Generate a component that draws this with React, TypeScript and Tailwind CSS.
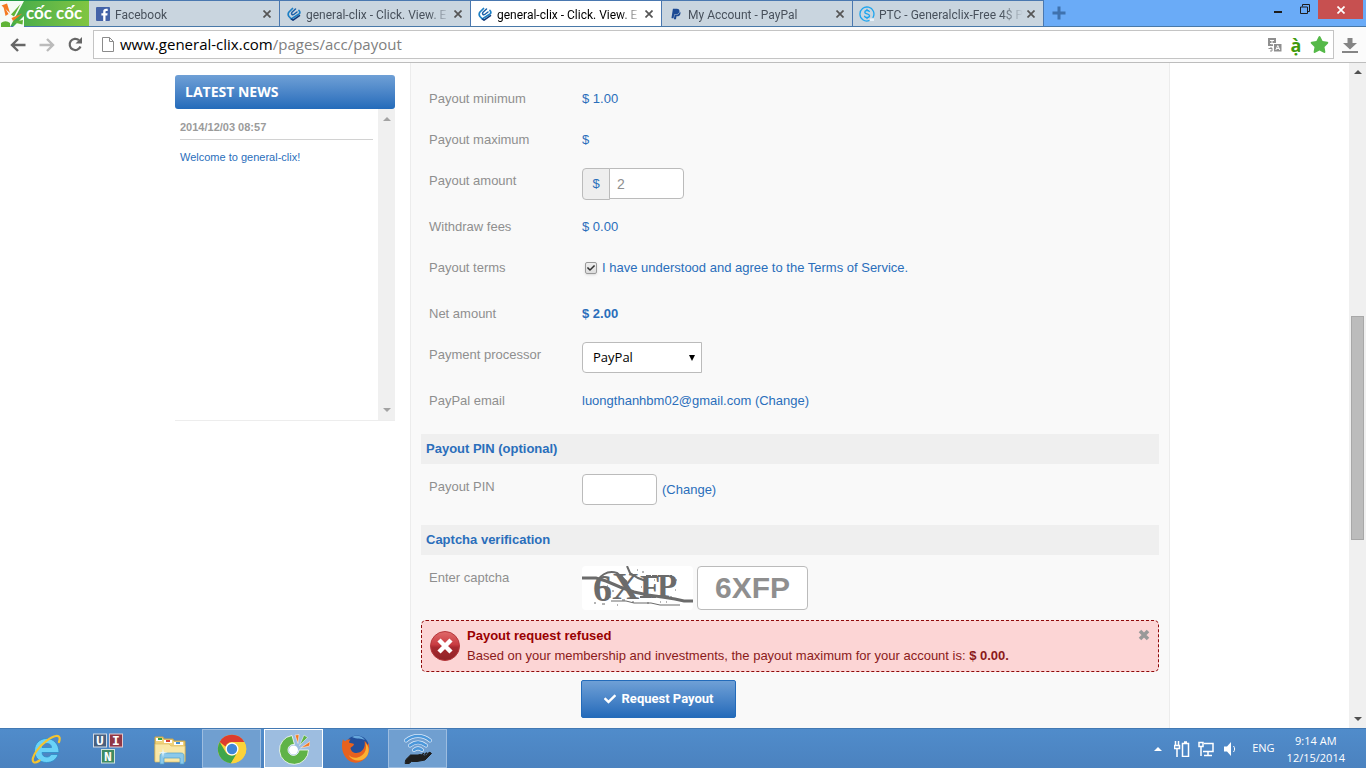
import type { ReactNode } from "react";
import { FaCheck, FaPaypal, FaStar } from "react-icons/fa";

const tabs = [
  { title: "Facebook", icon: <FacebookIcon /> },
  { title: "general-clix - Click. View. E", icon: <ClixIcon /> },
  { title: "general-clix - Click. View. E", icon: <ClixIcon />, active: true },
  { title: "My Account - PayPal", icon: <FaPaypal className="size-3 text-[#1c4a94]" /> },
  { title: "PTC - Generalclix-Free 4$ P", icon: <CoinIcon /> },
];

const taskbar = [
  { name: "Internet Explorer", icon: <ExplorerIcon /> },
  { name: "UniKey", icon: <UinIcon /> },
  { name: "File Explorer", icon: <FolderIcon /> },
  { name: "Google Chrome", icon: <ChromeIcon />, state: "open" },
  { name: "Coc Coc", icon: <CocCocIcon />, state: "focused" },
  { name: "Firefox", icon: <FirefoxIcon /> },
  { name: "Wifi hotspot", icon: <HotspotIcon />, state: "open" },
];

function FacebookIcon() {
  return (
    <svg viewBox="0 0 14 14" className="size-3.5">
      <rect width="14" height="14" rx="1" fill="#4463a8" />
      <path d="M7.2 14V8.4H5.4V6.2h1.8V4.7c0-2 1.1-2.9 2.9-2.9h1.6v2.1h-1.1c-.8 0-1.1.3-1.1 1v1.3h2.1l-.3 2.2H9.5V14z" fill="#fff" />
    </svg>
  );
}

function ClixIcon() {
  return (
    <svg viewBox="0 0 14 14" className="size-3.5" fill="none" strokeLinecap="round">
      <path d="M5.500 1.500 2 5C.8 6.500 1 8 2 9.500l2.300 2.500 7.700-5c1.200-1 .8-2.500 0-3.500" stroke="#1d7fc4" strokeWidth="1.700" />
      <path d="M8.500 2 5 5.200c-1.200 1.300.2 3.300 1.700 2.300L10 5" stroke="#1b5fa8" strokeWidth="1.500" />
      <path d="m4.500 12.200 1.500 1 6.500-4.500" stroke="#123a7c" strokeWidth="1.500" />
    </svg>
  );
}

function CoinIcon() {
  return (
    <svg viewBox="0 0 16 16" className="size-4" fill="none" stroke="#1fa5ee" strokeLinecap="round">
      <path d="M14 11.500A7 7 0 1 0 10 14.700" strokeWidth="1.300" />
      <path d="M10.300 5.500C9.500 4 5.800 4 5.800 6.200 5.800 8.500 10.500 7.300 10.500 9.800c0 2.200-4 2.200-4.900.5M8 3.500v1M8 11.500v1" strokeWidth="1.400" />
      <path d="M11 12.500h4v2.500h-4z" fill="#e7f1f9" stroke="none" />
    </svg>
  );
}

function BrandMark() {
  return (
    <svg viewBox="0 0 24 26" className="h-[26px] w-6">
      <path d="M0 0h24L10 26H0z" fill="#fff" opacity=".95" />
      <path d="M13 26h11V15z" fill="#fff" opacity=".95" />
      <path d="M3 3.500 8.500 13 5.500 15z" fill="#f47a20" />
      <path d="M1.500 4.500 7 2.500l3 9.500z" fill="#f47a20" />
      <path d="M20.500 3 11 13.500l3 2z" fill="#5fb336" />
      <path d="m22.500 12.500-11 4.500 1.500 3z" fill="#f47a20" />
      <path d="m12 21 11-2-.5 4.500z" fill="#5fb336" />
      <path d="M1 22a6.500 6.500 0 0 1 9 0v4H1z" fill="#5fb336" />
    </svg>
  );
}

function TranslateIcon() {
  return (
    <svg viewBox="0 0 14 14" className="size-3.5">
      <rect width="8" height="8" fill="#8f8f8f" />
      <path d="M2 2.500h4M4 2.500v4M2 5.500h4" stroke="#fff" fill="none" />
      <rect x="5.500" y="5.500" width="8.500" height="8.500" fill="#8f8f8f" stroke="#fff" />
      <path d="m7.800 12 2-4.500 2 4.500M8.500 10.500h2.600" stroke="#fff" fill="none" />
      <path d="M.5 10.500h3.500M2.500 9l1.500 1.500v2.500H2" stroke="#8f8f8f" fill="none" />
    </svg>
  );
}

function ExplorerIcon() {
  return (
    <svg viewBox="0 0 32 32" className="size-8">
      <path d="M28 21.500C26.500 26.500 22 29.500 16.500 29.500 9.500 29.500 4.500 24.500 4.500 17.500S10 5.500 16.500 5.500 29 10.500 29 19.500H12c.2 3 2 4.500 5 4.500 2 0 3.200-.9 4-2.500zM12 14.500h9.500c-.2-2.800-2-4-4.700-4s-4.500 1.300-4.800 4z" fill="#6ad2f7" stroke="#2e8cc8" strokeWidth=".8" />
      <path d="M29 9c1.500-4 .5-6.500-3-6-5 .7-14 7-19.500 15C3 23 1.500 28 4 29.300c1.500.7 3.500-.3 5.500-1.800" fill="none" stroke="#f4c430" strokeWidth="2.200" strokeLinecap="round" />
    </svg>
  );
}

function UinIcon() {
  return (
    <svg viewBox="0 0 30 31" className="h-8 w-[30px]" fontFamily="'Liberation Mono', monospace" fontWeight="700" fontSize="13" textAnchor="middle" fill="#fff">
      <rect x=".5" y=".5" width="13" height="13" fill="#49607f" stroke="#d5dce5" />
      <rect x="16.500" y=".5" width="13" height="13" fill="#913746" stroke="#e3c9cd" />
      <rect x="8.500" y="16" width="13" height="13.500" fill="#3f8b62" stroke="#cfe3d8" />
      <text x="7" y="11">U</text>
      <text x="23" y="11">I</text>
      <text x="15" y="27">N</text>
    </svg>
  );
}

function FolderIcon() {
  return (
    <svg viewBox="0 0 32 32" className="size-8">
      <path d="M1 4h8l1 2h9l1 2h11v20H1z" fill="#f0d27a" stroke="#c9a44a" />
      <path d="M2 5h6v3H2z" fill="#fff" /><path d="M4 5h4v2H4z" fill="#36a447" />
      <path d="M10 7h8v3h-8z" fill="#fff" /><path d="M12 7h4v2h-4z" fill="#d8432f" />
      <path d="M20 9h9v3h-9z" fill="#fff" /><path d="M22 9h4v2h-4z" fill="#3f8fd6" />
      <path d="M1 11h14l2 2h14v16H1z" fill="#f9e7a6" stroke="#dcbc62" strokeWidth=".7" />
      <path d="M6 31v-8c0-2 1.500-3 3-3h18c2 0 3 1 3 3v8h-4v-6H10v6z" fill="#8cc9ea" stroke="#4f9fc9" strokeWidth=".7" />
      <path d="m9 15 .7 4 4 .7-4 .7-.7 4-.7-4-4-.7 4-.7z" fill="#e6f7ff" />
    </svg>
  );
}

function ChromeIcon() {
  return (
    <svg viewBox="0 0 30 30" className="size-[30px]">
      <circle cx="15" cy="15" r="14.200" fill="#fbd23a" />
      <path d="M2.700 7.900A14.200 14.200 0 0 1 27.300 8H15a7 7 0 0 0-6.500 4.500z" fill="#dc3c2e" />
      <path d="M2.700 7.900A14.200 14.200 0 0 0 14 29.200l5.500-9.500a7 7 0 0 1-10.600-1.200z" fill="#3fa64b" />
      <path d="M14 29.200A14.200 14.200 0 0 0 27.300 8H15a7 7 0 0 1 6 10.500z" fill="#fbd23a" />
      <circle cx="15" cy="15" r="6.500" fill="#fff" />
      <circle cx="15" cy="15" r="5.200" fill="#3f86d8" />
    </svg>
  );
}

function CocCocIcon() {
  return (
    <svg viewBox="0 0 32 32" className="size-8">
      <path d="M14 2.500A14.500 14.500 0 1 0 30.500 17h-9.500a5.500 5.500 0 1 1-4.500-5.500z" fill="#5fb347" stroke="#fff" strokeWidth=".8" />
      <circle cx="15.500" cy="17" r="4.500" fill="#fff" />
      <path d="m17 2 4-.5-1 9z" fill="#f47a20" stroke="#fff" strokeWidth=".5" />
      <path d="m26 2 3.500 2.500-8 8z" fill="#5fb347" stroke="#fff" strokeWidth=".5" />
      <path d="m32 8.500-.5 4.500-9 2z" fill="#f47a20" stroke="#fff" strokeWidth=".5" />
    </svg>
  );
}

function FirefoxIcon() {
  return (
    <svg viewBox="0 0 30 30" className="size-[30px]">
      <circle cx="16" cy="13.500" r="12" fill="#23509b" />
      <path d="M11 3c4-2.500 10-1.500 13 3-4-2-8-.5-13-3z" fill="#66a7dc" />
      <path d="M2 5c.5 1.500 1.500 2 2.500 2 1.500-1.500 3-1.800 5-1.500-1 1-1.500 2-1.500 3 1.500 1 3.500.5 5 1.500 0 2-2.500 2.500-3.500 4 .5 4 4.500 6 8.500 4.500 5-2 6.500-7 5.500-11.500 1.500 1 2.500 2.500 3 4l1-2c3 9-3 19.500-12.500 19.800C6 29.200-2 18 2 5z" fill="#e7621f" />
      <path d="M24.500 9c2 7-1.500 13-8 14.500-4 .7-7-.5-9-2.500 4 7 14 7.500 18.500 1 2.500-4 2.500-9-1.500-13z" fill="#f9b233" />
    </svg>
  );
}

function HotspotIcon() {
  return (
    <svg viewBox="0 0 32 32" className="size-8" fill="none" strokeLinecap="round">
      <path d="M4 7.500c7-6 17-6 24 0M8 12.500c5-4 11-4 16 0M12 17c2.500-2 5.500-2 8 0" stroke="#dceafa" strokeWidth="4" />
      <path d="M4 7.500c7-6 17-6 24 0M8 12.500c5-4 11-4 16 0M12 17c2.500-2 5.500-2 8 0" stroke="#4b97da" strokeWidth="2.600" />
      <path d="M4 26.500 8.500 22h7.500l2-.500 5 1.500 5.500-3.500 1 1-6.500 6.500-8 1.500H9.500L7 30.500H3.500z" fill="#1f1f1f" stroke="#1f1f1f" strokeLinejoin="round" />
      <path d="m20 22 1.500-1.500M23 21.500l1.500-1.500M26 20.500l1.500-1" stroke="#1f1f1f" strokeWidth="1.500" />
    </svg>
  );
}

function CaptchaImage() {
  return (
    <svg viewBox="0 0 111 44" className="h-11 w-[111px] rounded bg-white" role="img" aria-label="Captcha">
      <g fontFamily="'Liberation Serif', serif" fontWeight="700" fill="#6b6b6b">
        <text x="11" y="35" fontSize="38">6</text>
        <text x="30" y="33" fontSize="38">X</text>
        <text x="58" y="32" fontSize="33">F</text>
        <text x="75" y="31" fontSize="33">P</text>
      </g>
      <g fill="none" stroke="#6b6b6b">
        <path d="M0 12h14l10 3 14 6 14 5 14 3 14 2 13 2 9 2h9" strokeWidth="3" />
        <path d="M14 20C16 9 26 4 35 7l10 9M45 0l3 7 8 5 8 3" strokeWidth="2" />
        <path d="M29 35h15l8 2h17l9 2h20" strokeWidth="1" />
        <path d="M12 37h2M20 38h3M40 34h3M35 39h1M50 36h2M55 4h1M52 9h2M60 6h2M65 37h2M78 36h1M88 31h2M93 24h1M94 14h1M27 31h2M25 20h1M30 25h2M72 14h1M84 36h1M59 21h1" strokeWidth="1" />
        <path d="M64 10h26M58 31h16" strokeWidth="2" strokeDasharray="5 1" />
      </g>
    </svg>
  );
}

function ErrorIcon() {
  return (
    <svg viewBox="0 0 30 30" className="size-[30px] shrink-0">
      <defs>
        <linearGradient id="err" x2="0" y2="1">
          <stop stopColor="#e06a6a" />
          <stop offset=".45" stopColor="#c93c42" />
          <stop offset=".55" stopColor="#a82a30" />
          <stop offset="1" stopColor="#8f2327" />
        </linearGradient>
      </defs>
      <circle cx="15" cy="15" r="14.500" fill="url(#err)" stroke="#b5383c" />
      <path d="m9 9 12 12M21 9 9 21" stroke="#fff" strokeWidth="4.500" />
    </svg>
  );
}

function ArrowMark({ down, color }: { down?: boolean; color: string }) {
  return (
    <svg viewBox="0 0 8 4" className="h-1 w-2">
      <path d={down ? "M0 0h8L4 4z" : "M0 4h8L4 0z"} fill={color} />
    </svg>
  );
}

function Row({ label, htmlFor, tall, children }: { label: string; htmlFor?: string; tall?: boolean; children: ReactNode }) {
  return (
    <div className={`flex items-start ${tall ? "min-h-[46px]" : "min-h-[41px]"}`}>
      <label htmlFor={htmlFor} className="w-[161px] shrink-0 pt-[11px] pl-2 leading-5 text-[#8f8f8f]">
        {label}
      </label>
      {children}
    </div>
  );
}

function SectionTitle({ children }: { children: ReactNode }) {
  return <h3 className="mt-[13px] mb-0.5 bg-[#efefef] pl-[5px] leading-[30px] font-bold">{children}</h3>;
}

function BrowserTabs() {
  return (
    <header className="flex h-[27px] shrink-0 items-start border-b border-[#4878a8] bg-[#6aabf7] font-['Roboto',sans-serif]">
      <button className="flex h-full w-[89px] shrink-0 items-center gap-0.5 border-t border-[#239a47] bg-linear-to-r from-[#35a74b] to-[#80c541] font-['Lato',sans-serif] text-[17px] font-bold text-white">
        <BrandMark />
        <span className="whitespace-nowrap">cốc cốc</span>
      </button>
      <nav className="flex h-full min-w-0 flex-1">
        {tabs.map((t, i) => (
          <div
            key={i}
            className={`flex h-full w-[191px] items-center border-t border-r border-[#4a78b0] pr-1 pl-1.5 ${t.active ? "bg-white text-black" : "bg-[#c9d5df] text-[#48515c]"}`}
          >
            <span className="flex w-4 shrink-0 justify-center">{t.icon}</span>
            <a href="#" className="ml-1 min-w-0 flex-1 overflow-hidden mask-r-from-85% pt-0.5 whitespace-nowrap">
              {t.title}
            </a>
            <button aria-label="Close tab" className="p-1 text-[#555]">
              <svg viewBox="0 0 8 8" className="size-2">
                <path d="m.5.5 7 7M7.500.5l-7 7" stroke="currentColor" strokeWidth="1.700" />
              </svg>
            </button>
          </div>
        ))}
        <button aria-label="New tab" className="ml-2 self-center">
          <svg viewBox="0 0 14 14" className="size-3.5">
            <path d="M7 .5v13M.5 7h13" stroke="#3f72ae" strokeWidth="3" />
          </svg>
        </button>
      </nav>
      <div className="flex items-start pr-[3px]">
        <button aria-label="Minimize" className="flex h-[18px] w-7 items-center justify-center pt-1.5">
          <span className="h-0.5 w-2 bg-[#1c1c1c]" />
        </button>
        <button aria-label="Restore" className="flex h-[18px] w-[26px] items-center justify-center">
          <svg viewBox="0 0 10 10" className="size-2.5" fill="none" stroke="#1c1c1c">
            <path d="M2.500 2.500v-2h7v7h-2M.5 3h7v6.500h-7z" />
          </svg>
        </button>
        <button aria-label="Close" className="flex h-[19px] w-[45px] items-center justify-center bg-[#c75050]">
          <svg viewBox="0 0 8 8" className="size-2">
            <path d="m.5.5 7 7M7.500.5l-7 7" stroke="#fff" strokeWidth="1.700" />
          </svg>
        </button>
      </div>
    </header>
  );
}

function Toolbar() {
  return (
    <div className="flex h-9 shrink-0 items-center border-b border-[#bdbdbd] bg-[#fbfbfb] px-2">
      <div className="flex w-[85px] shrink-0 items-center gap-[13px] pl-0.5">
        {["Back", "Forward"].map((name) => (
          <button key={name} aria-label={name}>
            <svg viewBox="0 0 16 14" className="h-3.5 w-4" fill="none" stroke={name === "Back" ? "#666" : "#bbb"} strokeWidth="2.400">
              <path d={name === "Back" ? "M15.500 7H2M8 1 2 7l6 6" : "M.5 7H14M8 1l6 6-6 6"} />
            </svg>
          </button>
        ))}
        <button aria-label="Reload">
          <svg viewBox="0 0 15 15" className="size-[15px]">
            <path d="M12.500 9.500A5.600 5.600 0 1 1 11 3.200" fill="none" stroke="#666" strokeWidth="2.200" />
            <path d="M14 0v6.500H7.500z" fill="#666" />
          </svg>
        </button>
      </div>
      <div className="flex h-[29px] min-w-0 flex-1 items-center gap-1.5 border border-[#c4c4c4] bg-white pr-1 pl-2">
        <svg viewBox="0 0 12 15" className="h-[15px] w-3 shrink-0" fill="#fff" stroke="#8b8b8b">
          <path d="M.5.5h7l4 4v10H.5zM7.500.5v4h4" />
        </svg>
        <div className="flex-1 pb-0.5 font-['Open_Sans',sans-serif] text-[15px] text-[#808080]">
          <span className="text-black">www.general-clix.com</span>/pages/acc/payout
        </div>
        <TranslateIcon />
        <span className="w-4 text-center font-['Open_Sans',sans-serif] text-lg leading-5 font-bold text-[#3f9a0c]">ạ̀</span>
        <FaStar className="size-[19px] text-[#55b948]" />
      </div>
      <button aria-label="Downloads" className="ml-2">
        <svg viewBox="0 0 16 16" className="size-4" fill="#858585">
          <path d="M5.500 1h5v5H15l-7 6.500L1 6h4.500zM0 14h16v2H0z" />
        </svg>
      </button>
    </div>
  );
}

function News() {
  return (
    <aside className="w-[220px] shrink-0 pt-3">
      <h2 className="rounded-[3px] bg-linear-to-b from-[#6fa0d6] to-[#236bba] pl-2.5 font-['Open_Sans',sans-serif] text-sm leading-[34px] font-bold text-white">
        LATEST NEWS
      </h2>
      <div className="flex h-[312px] border-b border-[#ededed]">
        <div className="flex-1 px-[5px] pt-2.5 text-[11px] leading-4">
          <div className="border-b border-[#d2d2d2] pb-1 font-bold text-[#9b9b9b]">2014/12/03 08:57</div>
          <a href="#" className="mt-[9px] block text-[#2a6ebb]">Welcome to general-clix!</a>
        </div>
        <div className="flex w-[17px] flex-col items-center justify-between bg-[#f0f0f0] py-2">
          <ArrowMark color="#a3a3a3" />
          <ArrowMark color="#a3a3a3" down />
        </div>
      </div>
    </aside>
  );
}

function PayoutForm() {
  return (
    <form className="min-w-0 flex-1 border-x border-[#ececec] bg-[#f9f9f9] px-2.5 pt-[15px] text-[13px] leading-5 text-[#2a6ebb]">
      <Row label="Payout minimum"><span className="pt-[11px]">$ 1.00</span></Row>
      <Row label="Payout maximum"><span className="pt-[11px]">$</span></Row>
      <Row label="Payout amount" htmlFor="amount" tall>
        <div className="mt-2 flex items-start">
          <span className="h-8 w-7 rounded-l border border-[#bbb] bg-[#eee] text-center leading-[30px]">$</span>
          <input id="amount" defaultValue="2" className="-ml-px h-[31px] w-[75px] rounded-r border border-[#bbb] bg-white px-[7px] text-sm text-[#8f8f8f]" />
        </div>
      </Row>
      <Row label="Withdraw fees"><span className="pt-[11px]">$ 0.00</span></Row>
      <Row label="Payout terms" tall>
        <label className="flex items-center gap-[5px] pt-[11px] pl-[3px]">
          <span className="grid size-3 place-items-center">
            <input type="checkbox" defaultChecked className="peer col-start-1 row-start-1 size-3 appearance-none rounded-[2px] border border-[#9a9a9a] bg-linear-to-b from-[#eee] to-[#ddd] shadow-sm" />
            <FaCheck className="pointer-events-none invisible col-start-1 row-start-1 size-2 text-[#333] peer-checked:visible" />
          </span>
          I have understood and agree to the Terms of Service.
        </label>
      </Row>
      <Row label="Net amount"><span className="pt-[11px] font-bold">$ 2.00</span></Row>
      <Row label="Payment processor" htmlFor="processor" tall>
        <div className="mt-2 grid w-[120px] items-center">
          <select id="processor" className="col-start-1 row-start-1 h-[31px] appearance-none rounded-l border border-[#bbb] bg-white pb-0.5 pl-2.5 font-['Open_Sans',sans-serif] text-[13px] text-black">
            <option>PayPal</option>
          </select>
          <svg viewBox="0 0 6 6" className="pointer-events-none col-start-1 row-start-1 mr-[7px] size-1.5 justify-self-end">
            <path d="M0 0h6L3 6z" />
          </svg>
        </div>
      </Row>
      <Row label="PayPal email">
        <span className="pt-[11px]">luongthanhbm02@gmail.com <a href="#">(Change)</a></span>
      </Row>

      <SectionTitle>Payout PIN (optional)</SectionTitle>
      <Row label="Payout PIN" htmlFor="pin" tall>
        <div className="flex items-center gap-[5px] pt-2">
          <input id="pin" type="password" className="h-[31px] w-[75px] rounded border border-[#bbb] bg-white px-2" />
          <a href="#">(Change)</a>
        </div>
      </Row>

      <SectionTitle>Captcha verification</SectionTitle>
      <Row label="Enter captcha" htmlFor="captcha">
        <div className="flex gap-1 pt-[9px] pb-2.5">
          <CaptchaImage />
          <input id="captcha" defaultValue="6XFP" className="h-11 w-[111px] rounded border border-[#bbb] bg-white text-center text-3xl font-bold text-[#8f8f8f]" />
        </div>
      </Row>

      <div role="alert" className="flex min-h-[52px] items-start gap-[7px] rounded-[5px] border border-dashed border-[#8f0a0a] bg-[#fcd5d5] px-2 text-[#900]">
        <div className="self-center"><ErrorIcon /></div>
        <div className="flex-1 pt-[5px] text-[#8b1a1a]">
          <div className="font-bold text-[#900]">Payout request refused</div>
          <div>
            Based on your membership and investments, the payout maximum for your account is: <b>$ 0.00.</b>
          </div>
        </div>
        <button type="button" aria-label="Dismiss" className="pt-2">
          <svg viewBox="0 0 12 12" className="size-3">
            <path d="m2 2 8 8M10 2l-8 8" stroke="#999" strokeWidth="3.600" />
          </svg>
        </button>
      </div>
      <button
        type="button"
        className="mt-2 ml-40 flex h-[38px] w-[155px] items-center justify-center gap-1.5 rounded-[2px] border border-[#236bba] bg-linear-to-b from-[#6fa0d6] to-[#236bba] font-['Roboto',sans-serif] font-bold text-white"
      >
        <FaCheck className="size-3" />
        Request Payout
      </button>
    </form>
  );
}

function Taskbar() {
  return (
    <footer className="flex h-10 shrink-0 items-stretch border-t border-[#4379b3] bg-linear-to-b from-[#508ccb] to-[#4b82bf] pr-[21px] font-['Open_Sans',sans-serif] text-white">
      <div className="flex gap-[3px] pl-4">
        {taskbar.map((t) => (
          <button
            key={t.name}
            aria-label={t.name}
            className={`flex w-[59px] items-center justify-center border ${
              t.state === "focused"
                ? "border-white bg-[#9dbde0]"
                : t.state === "open"
                  ? "border-[#9dbde0] bg-[#709fd0]"
                  : "border-transparent"
            }`}
          >
            {t.icon}
          </button>
        ))}
      </div>
      <div className="ml-auto flex items-center">
        <ArrowMark color="#fff" />
        <svg viewBox="0 0 16 16" className="ml-3 size-4" fill="none" stroke="#fff">
          <path d="M1.500 0v4M4.500 0v4M.5 4.500h5v3h-5zM3 8v8" strokeWidth="1.500" />
          <path d="M8.500 2.500h6v13h-6zM10 1h3" strokeWidth="1.500" />
        </svg>
        <svg viewBox="0 0 16 16" className="ml-2 size-4" fill="none" stroke="#fff">
          <path d="M6 2.500h9v8H5M10 11v3M6 14.500h8" strokeWidth="1.500" />
          <path d="M1 1.500h4v4H1zM3 6v9" strokeWidth="1.500" />
        </svg>
        <svg viewBox="0 0 14 14" className="ml-2.5 size-3.5" fill="#fff">
          <path d="M0 4.500h3L7 0v14L3 9.500H0z" />
          <path d="M9.500 4c1.500 2 1.500 4 0 6" fill="none" stroke="#fff" />
        </svg>
        <span className="ml-3.5 text-[11px]">ENG</span>
        <div className="ml-3 text-center text-[11px] leading-[17px]">
          <div>9:14 AM</div>
          <div>12/15/2014</div>
        </div>
      </div>
    </footer>
  );
}

export default function App() {
  return (
    <div className="flex h-screen flex-col overflow-hidden bg-white font-['Liberation_Sans',Arial,sans-serif] text-xs">
      <BrowserTabs />
      <Toolbar />
      <div className="flex min-h-0 flex-1">
        <main className="min-w-0 flex-1 overflow-hidden">
          <div className="mx-auto flex min-h-full max-w-[999px] gap-[15px] pr-1">
            <News />
            <PayoutForm />
          </div>
        </main>
        <div className="flex w-[17px] shrink-0 flex-col items-center bg-[#f0f0f0] py-[7px]">
          <ArrowMark color="#505050" />
          <div className="flex w-[13px] flex-1 flex-col py-1">
            <div className="grow-[239]" />
            <div className="grow-[224] border border-[#a8a8a8] bg-[#bcbcbc]" />
            <div className="grow-[174]" />
          </div>
          <ArrowMark color="#505050" down />
        </div>
      </div>
      <Taskbar />
    </div>
  );
}
